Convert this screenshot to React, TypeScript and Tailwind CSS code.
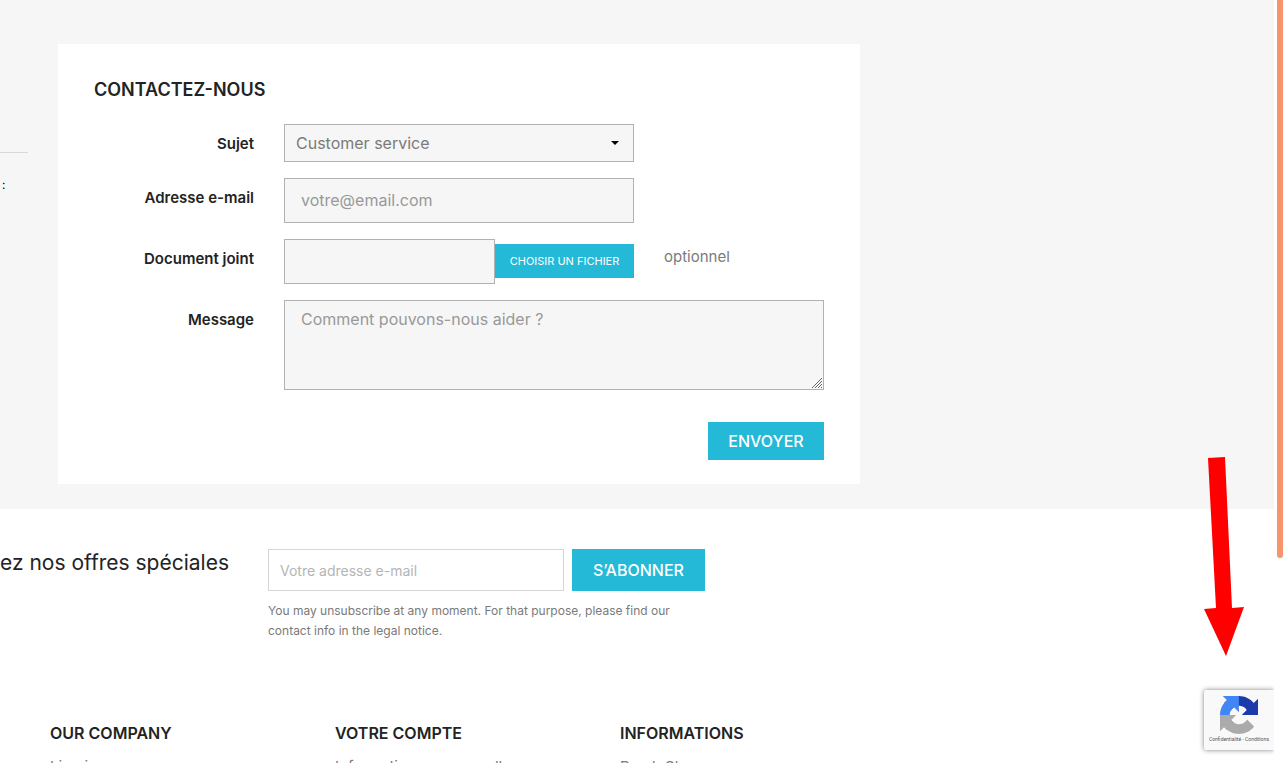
import { useState } from 'react'
import type { ReactNode } from 'react'

const inputClass = 'border border-[#b2b2b2] bg-[#f6f6f6] px-4 text-[#7a7a7a] placeholder:text-[#999999]'

const footerColumns = [
  { title: 'OUR COMPANY', links: ['Livraison'] },
  { title: 'VOTRE COMPTE', links: ['Informations personnelles'] },
  { title: 'INFORMATIONS', links: ['PrestaShop'] },
]

function FormRow({ label, id, children }: { label: string; id: string; children: ReactNode }) {
  return (
    <div className="flex items-start">
      <label htmlFor={id} className="w-40 shrink-0 pt-2.5 text-right text-[15px] leading-5 font-semibold text-[#232323]">
        {label}
      </label>
      <div className="ml-[30px] flex min-w-0 flex-1 items-start">{children}</div>
    </div>
  )
}

function ContactForm() {
  const [subject, setSubject] = useState('Customer service')

  return (
    <form className="w-[802px] bg-white px-9 pt-[34px] pb-6" onSubmit={(e) => e.preventDefault()}>
      <h3 className="text-lg leading-6 font-semibold text-[#232323]">CONTACTEZ-NOUS</h3>
      <div className="mt-[22px] flex flex-col gap-4">
        <FormRow label="Sujet" id="subject">
          <div className="relative w-[350px]">
            <select
              id="subject"
              value={subject}
              onChange={(e) => setSubject(e.target.value)}
              className="h-[38px] w-full appearance-none border border-[#b2b2b2] bg-[#f6f6f6] px-[11px] text-base text-[#7a7a7a]"
            >
              <option>Customer service</option>
              <option>Webmaster</option>
            </select>
            <svg viewBox="0 0 8 4" className="pointer-events-none absolute top-[17px] right-[15px] h-1 w-2">
              <path d="M0 0h8L4 4z" fill="#000" />
            </svg>
          </div>
        </FormRow>
        <FormRow label="Adresse e-mail" id="email">
          <input
            id="email"
            type="email"
            placeholder="votre@email.com"
            className={`h-[45px] w-[350px] pb-0.5 ${inputClass}`}
          />
        </FormRow>
        <FormRow label="Document joint" id="file">
          <div className="flex w-[350px] items-start">
            <input id="file" type="text" className={`h-[45px] min-w-0 flex-1 ${inputClass}`} />
            <button type="button" className="mt-[5px] h-[34px] w-[139px] bg-[#24b9d7] text-[11px] text-white">
              CHOISIR UN FICHIER
            </button>
          </div>
          <span className="ml-[30px] pt-2 text-[15px] leading-5 text-[#7a7a7a]">optionnel</span>
        </FormRow>
        <FormRow label="Message" id="message">
          <div className="relative flex flex-1">
            <textarea
              id="message"
              placeholder="Comment pouvons-nous aider ?"
              className={`h-[90px] flex-1 resize py-1.5 [&::-webkit-resizer]:bg-[#f6f6f6] ${inputClass}`}
            />
            <svg
              viewBox="0 0 10 10"
              className="pointer-events-none absolute right-0.5 bottom-0.5 h-2.5 w-2.5"
              stroke="#666"
              strokeWidth="1"
            >
              <path d="M0 10L10 0M3 10L10 3M6 10L10 6M9 10L10 9" />
            </svg>
          </div>
        </FormRow>
      </div>
      <div className="mt-8 flex justify-end">
        <button type="submit" className="h-[38px] w-[116px] bg-[#24b9d7] text-base font-medium text-white">
          ENVOYER
        </button>
      </div>
    </form>
  )
}

function Newsletter() {
  return (
    <div className="flex items-start pt-10">
      {/* the heading runs off the left side of the page */}
      <div className="flex w-[229px] justify-end">
        <p className="text-[21px] leading-7 whitespace-nowrap text-[#232323]">ez nos offres spéciales</p>
      </div>
      <form className="ml-[39px] w-[437px]" onSubmit={(e) => e.preventDefault()}>
        <div className="flex gap-2">
          <input
            type="email"
            aria-label="Votre adresse e-mail"
            placeholder="Votre adresse e-mail"
            className="h-[42px] min-w-0 flex-1 border border-[#d6d6d6] bg-white px-[11px] text-sm placeholder:text-[#b5b5b5]"
          />
          <button type="submit" className="h-[42px] w-[133px] bg-[#24b9d7] text-base font-medium text-white">
            S’ABONNER
          </button>
        </div>
        <p className="mt-2.5 text-xs leading-5 text-[#7a7a7a]">
          You may unsubscribe at any moment. For that purpose, please find our
          <br />
          contact info in the legal notice.
        </p>
      </form>
    </div>
  )
}

function RecaptchaBadge() {
  return (
    <div className="absolute top-[690px] right-0 flex h-[60px] w-[70px] flex-col items-center rounded-l-[2px] bg-[#f9f9f9] pt-1.5 shadow-[0_0_5px_#808080]">
      <svg viewBox="0 0 64 64" className="h-[38px] w-[38px]">
        <path
          d="M64 31.955l-.016-1.37V4.687l-7.16 7.16C50.964 4.674 42.033.093 32.039.093c-10.4 0-19.638 4.96-25.458 12.64l11.736 11.86a15.55 15.55 0 0 1 4.754-5.334c2.05-1.6 4.952-2.906 8.968-2.906.485 0 .86.057 1.135.163 4.976.393 9.288 3.14 11.828 7.124l-8.307 8.307L64 31.953"
          fill="#1c3aa9"
        />
        <path
          d="M31.862.094l-1.37.016H4.594l7.16 7.16C4.58 13.147 0 22.06 0 32.055c0 10.4 4.96 19.638 12.64 25.458L24.5 45.777a15.55 15.55 0 0 1-5.334-4.754c-1.6-2.05-2.906-4.952-2.906-8.968 0-.485.057-.86.163-1.135.393-4.976 3.14-9.288 7.124-11.828l8.307 8.307L31.86.095"
          fill="#4285f4"
        />
        <path
          d="M.001 32.045l.016 1.37v25.898l7.16-7.16c5.86 7.173 14.774 11.754 24.77 11.754 10.4 0 19.638-4.96 25.458-12.64l-11.736-11.86a15.55 15.55 0 0 1-4.754 5.334c-2.05 1.6-4.952 2.906-8.968 2.906-.485 0-.86-.057-1.135-.163-4.976-.393-9.288-3.14-11.828-7.124l8.307-8.307-27.29.001"
          fill="#ababab"
        />
      </svg>
      <p className="mt-0.5 font-[Roboto,sans-serif] text-[5px] leading-[7px] whitespace-nowrap text-[#555555]">
        <a href="#privacy">Confidentialité</a> - <a href="#terms">Conditions</a>
      </p>
    </div>
  )
}

export default function App() {
  return (
    <div className="relative flex h-screen overflow-hidden bg-white font-[Inter,sans-serif]">
      <div className="relative min-w-0 flex-1 overflow-hidden">
        <main className="flex bg-[#f6f6f6] pt-11 pb-[25px]">
          <aside className="w-7 shrink-0 pt-[108px]">
            <hr className="border-[#d9d9d9]" />
            <p className="mt-6 pl-0.5 text-xs">:</p>
          </aside>
          <div className="ml-[30px]">
            <ContactForm />
          </div>
        </main>
        <footer>
          <Newsletter />
          <div className="mt-20 flex pl-[50px]">
            {footerColumns.map((column) => (
              <div key={column.title} className="w-[285px]">
                <h4 className="text-base leading-6 font-semibold text-[#232323]">{column.title}</h4>
                <ul className="mt-3 text-[15px] leading-5 text-[#7a7a7a]">
                  {column.links.map((link) => (
                    <li key={link}>
                      <a href="#">{link}</a>
                    </li>
                  ))}
                </ul>
              </div>
            ))}
          </div>
        </footer>
        <RecaptchaBadge />
      </div>

      {/* Scrollbar */}
      <div className="flex w-3 shrink-0 items-start justify-center bg-white">
        <div className="h-[558px] w-1.5 rounded-b-full bg-[#f6946c]" />
      </div>

      <svg viewBox="0 0 40 199" className="absolute top-[457px] right-[42px] h-[199px] w-10">
        <path d="M4 1L21 0L28 151L40 150L22 199L0 152L12 151Z" fill="#ff0000" />
      </svg>
    </div>
  )
}
